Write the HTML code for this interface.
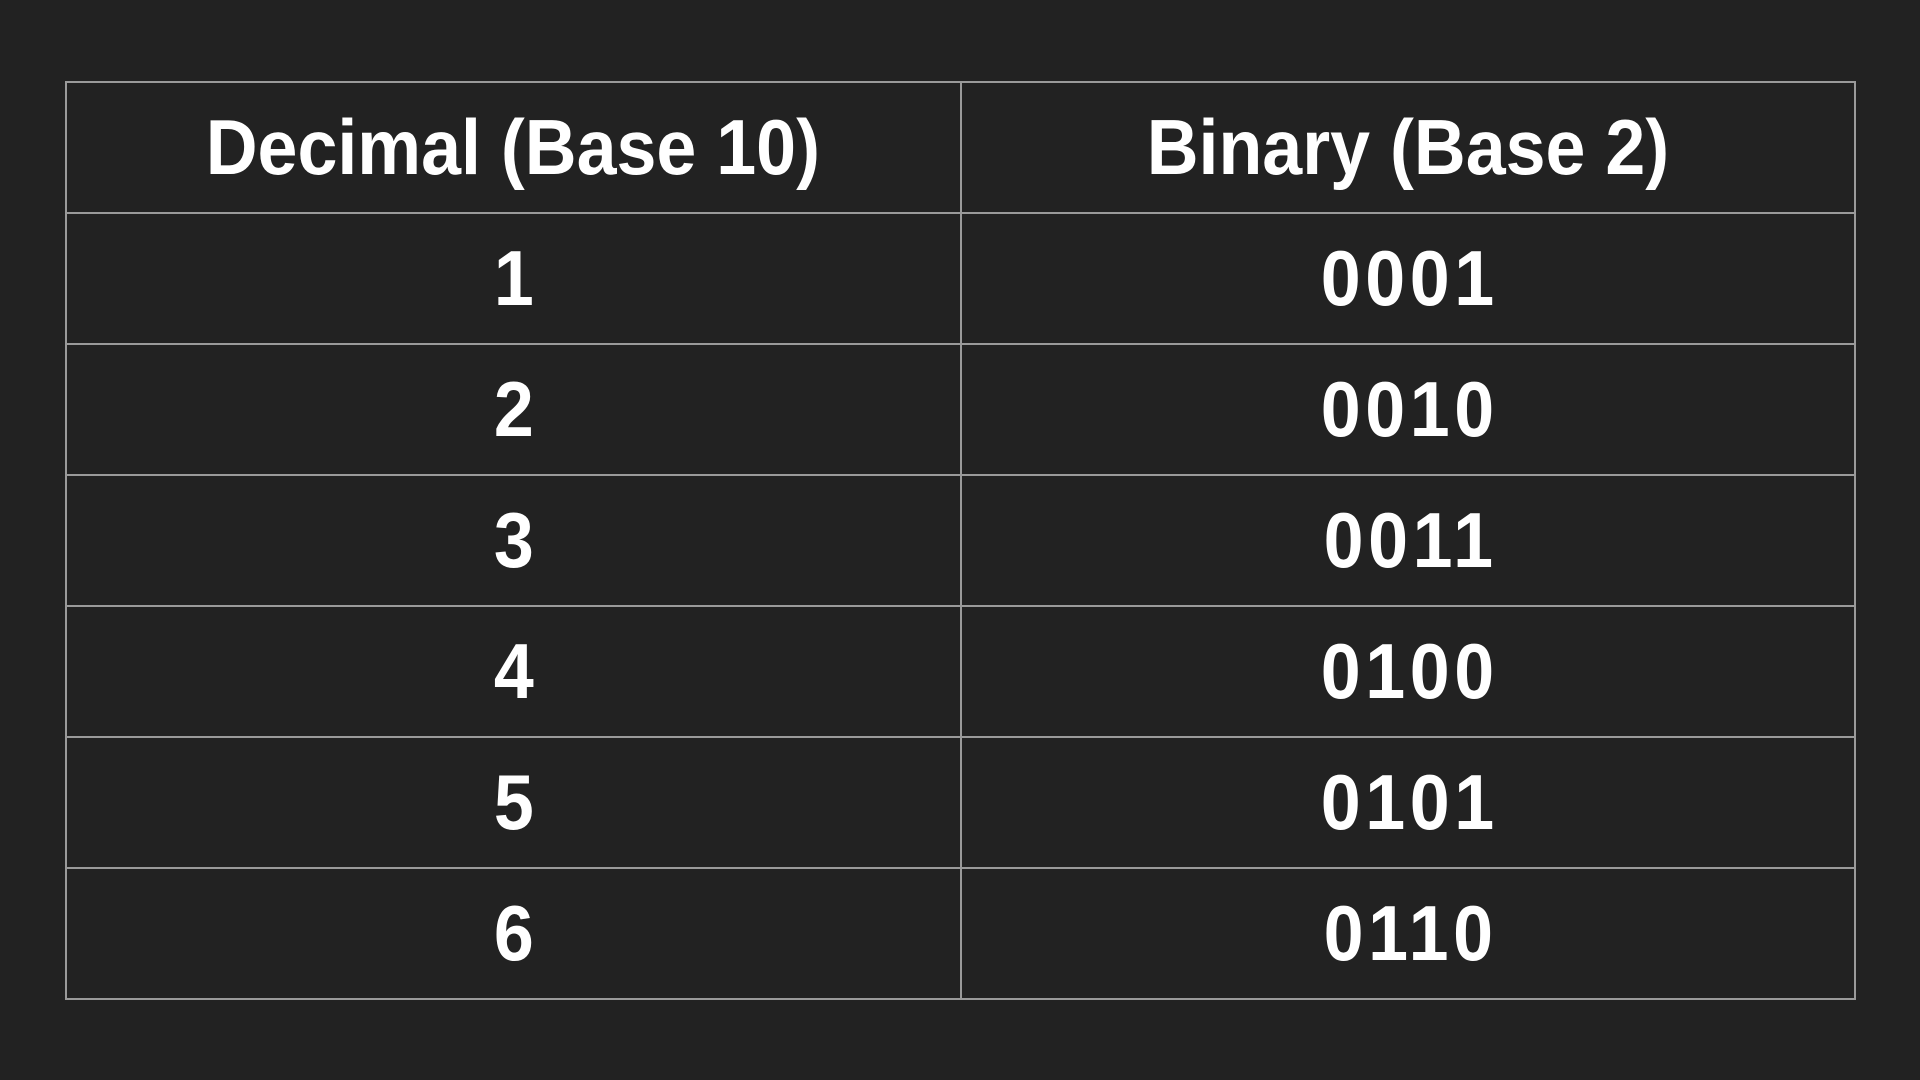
<!DOCTYPE html>
<html><head><meta charset="utf-8"><style>
html,body{margin:0;padding:0;background:#222222;width:1920px;height:1080px;overflow:hidden}
table{position:absolute;left:65px;top:81px;width:1791px;height:919px;border-collapse:collapse;table-layout:fixed}
td{border:2px solid #9a9a9a;color:#fff;text-align:center;vertical-align:middle;font-family:"Liberation Sans",sans-serif;font-weight:bold;font-size:78px;height:127px;padding:0;letter-spacing:0}
td span{display:inline-block;transform:scaleX(0.92)}
td.n span{letter-spacing:5px;margin-right:-5px}
</style></head><body>
<table>
<tr><td><span>Decimal (Base 10)</span></td><td><span>Binary (Base 2)</span></td></tr>
<tr><td class="n"><span>1</span></td><td class="n"><span>0001</span></td></tr>
<tr><td class="n"><span>2</span></td><td class="n"><span>0010</span></td></tr>
<tr><td class="n"><span>3</span></td><td class="n"><span>0011</span></td></tr>
<tr><td class="n"><span>4</span></td><td class="n"><span>0100</span></td></tr>
<tr><td class="n"><span>5</span></td><td class="n"><span>0101</span></td></tr>
<tr><td class="n"><span>6</span></td><td class="n"><span>0110</span></td></tr>
</table>
</body></html>
